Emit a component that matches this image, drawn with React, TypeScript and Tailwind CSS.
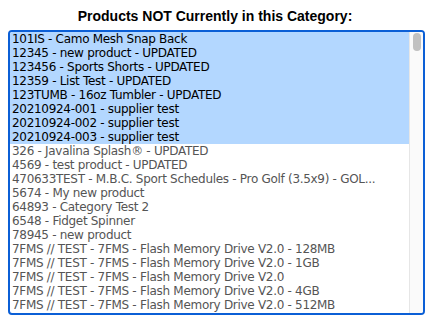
import React from 'react';

// ─── Data ─────────────────────────────────────────────────────────────────────
const rows: { label: string; selected?: boolean }[] = [
  { label: '101IS - Camo Mesh Snap Back', selected: true },
  { label: '12345 - new product - UPDATED', selected: true },
  { label: '123456 - Sports Shorts - UPDATED', selected: true },
  { label: '12359 - List Test - UPDATED', selected: true },
  { label: '123TUMB - 16oz Tumbler - UPDATED', selected: true },
  { label: '20210924-001 - supplier test', selected: true },
  { label: '20210924-002 - supplier test', selected: true },
  { label: '20210924-003 - supplier test', selected: true },
  { label: '326 - Javalina Splash® - UPDATED' },
  { label: '4569 - test product - UPDATED' },
  { label: '470633TEST - M.B.C. Sport Schedules - Pro Golf (3.5x9) - GOL...' },
  { label: '5674 - My new product' },
  { label: '64893 - Category Test 2' },
  { label: '6548 - Fidget Spinner' },
  { label: '78945 - new product' },
  { label: '7FMS // TEST - 7FMS - Flash Memory Drive V2.0 - 128MB' },
  { label: '7FMS // TEST - 7FMS - Flash Memory Drive V2.0 - 1GB' },
  { label: '7FMS // TEST - 7FMS - Flash Memory Drive V2.0' },
  { label: '7FMS // TEST - 7FMS - Flash Memory Drive V2.0 - 4GB' },
  { label: '7FMS // TEST - 7FMS - Flash Memory Drive V2.0 - 512MB' },
];

export default function App() {
  return (
    <div className="w-[430px] h-[322px] bg-white pt-[8px] overflow-hidden">
      {/* Heading */}
      <div className="text-center font-['Liberation_Sans',Arial,sans-serif] text-[14px] leading-[16px] font-bold text-black">
        Products NOT Currently in this Category:
      </div>

      {/* Multi-select list box (focused) */}
      <div className="mt-[6px] ml-[8px] w-[417px] h-[285px] flex border-2 border-[#0b5fd6] rounded-[4px] overflow-hidden bg-white">
        <div className="flex-1 flex flex-col font-['DejaVu_Sans',Verdana,sans-serif] text-[12px] leading-[14px] tracking-[-0.3px]">
          {rows.map((r) => (
            <div
              key={r.label}
              className={
                r.selected
                  ? 'h-[14px] pl-[2px] whitespace-nowrap bg-[#b3d7ff] text-black'
                  : 'h-[14px] pl-[2px] whitespace-nowrap text-[#555555]'
              }
            >
              {r.label}
            </div>
          ))}
        </div>

        {/* Scrollbar */}
        <div className="w-[14px] flex-shrink-0 bg-[#fafafa] border-l border-[#e6e6e6] pt-[1px] flex justify-center">
          <div className="w-[8px] h-[18px] rounded-full bg-[#c1c1c1]" />
        </div>
      </div>
    </div>
  );
}
